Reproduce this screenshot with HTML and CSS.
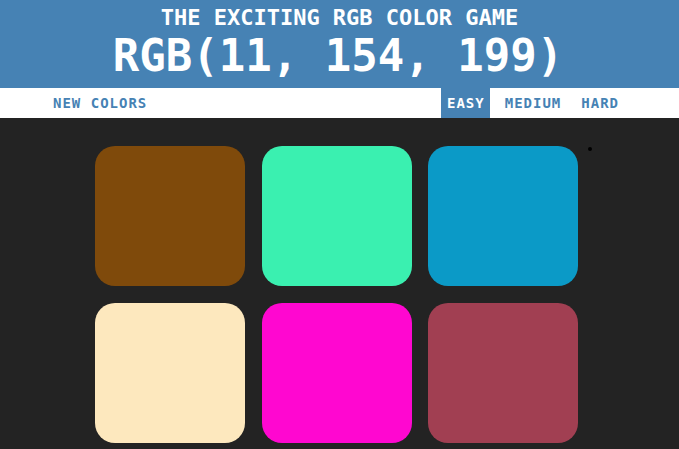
FILE: index.html
```html
<!DOCTYPE html>
<html>
<head>
<meta charset="utf-8">
<link rel="stylesheet" href="styles.css">
</head>
<body>
<header class="head">
  <h1 class="title">THE EXCITING RGB COLOR GAME</h1>
  <div class="rgb">RGB(11, 154, 199)</div>
</header>
<nav class="stripe">
  <button class="btn">NEW COLORS</button>
  <div class="modes">
    <button class="btn active">EASY</button>
    <button class="btn">MEDIUM</button>
    <button class="btn">HARD</button>
  </div>
</nav>
<main class="board">
  <div class="sq c1"></div>
  <div class="sq c2"></div>
  <div class="sq c3"></div>
  <div class="sq c4"></div>
  <div class="sq c5"></div>
  <div class="sq c6"></div>
  <span class="dot"></span>
</main>
</body>
</html>
```
FILE: styles.css
```css
html, body {
  margin: 0;
  padding: 0;
  background: #232323;
  font-family: "DejaVu Sans Mono", monospace;
  overflow: hidden;
}
.head {
  background: #4682b4;
  color: #fff;
  text-align: center;
  height: 88px;
  padding-top: 6px;
  box-sizing: border-box;
}
.title {
  margin: 0;
  font-size: 22px;
  font-weight: bold;
  line-height: 24px;
}
.rgb {
  font-size: 44px;
  font-weight: bold;
  line-height: 52px;
  padding-right: 3px;
}
.stripe {
  background: #fff;
  height: 30px;
  display: flex;
  align-items: stretch;
  padding-left: 47px;
  padding-right: 55px;
}
.modes {
  margin-left: auto;
  display: flex;
  gap: 9px;
}
.btn {
  border: none;
  background: none;
  color: #4682b4;
  font-family: "DejaVu Sans Mono", monospace;
  font-weight: bold;
  font-size: 14px;
  letter-spacing: 1px;
  padding: 0 5px 0 6px;
  height: 30px;
  margin: 0;
}
.btn.active {
  background: #4682b4;
  color: #fff;
}
.board {
  position: relative;
  width: 483px;
  margin: 28px 0 0 95px;
  display: grid;
  grid-template-columns: repeat(3, 150px);
  grid-auto-rows: 140px;
  column-gap: 16.5px;
  row-gap: 17px;
}
.sq {
  border-radius: 20px;
}
.c1 { background: rgb(127, 74, 11); }
.c2 { background: rgb(58, 240, 176); }
.c3 { background: rgb(11, 154, 199); }
.c4 { background: rgb(253, 232, 190); }
.c5 { background: rgb(255, 7, 208); }
.c6 { background: rgb(161, 63, 82); }
.dot {
  position: absolute;
  left: 493px;
  top: 1px;
  width: 4px;
  height: 4px;
  border-radius: 50%;
  background: #000;
}
```
